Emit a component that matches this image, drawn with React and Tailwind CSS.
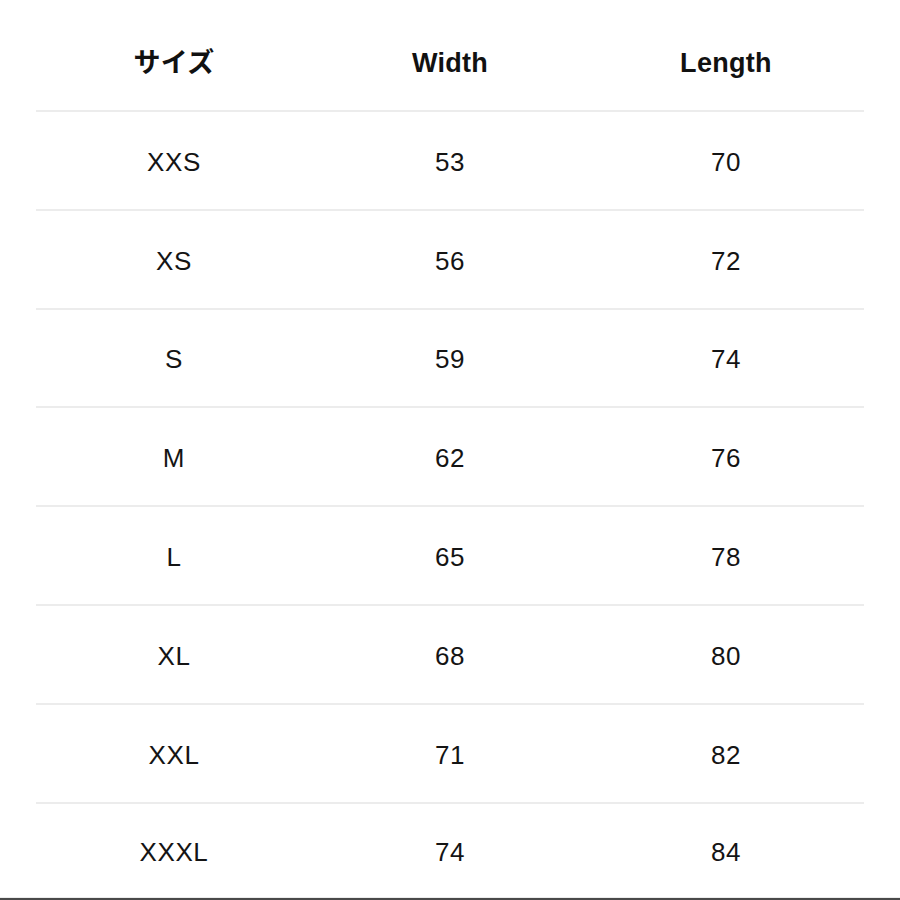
import React from "react";

const rows = [
  ["XXS", "53", "70"],
  ["XS", "56", "72"],
  ["S", "59", "74"],
  ["M", "62", "76"],
  ["L", "65", "78"],
  ["XL", "68", "80"],
  ["XXL", "71", "82"],
  ["XXXL", "74", "84"],
];

export default function App() {
  return (
    <div
      className="w-[900px] h-[900px] bg-white flex flex-col overflow-hidden text-[#141414]"
      style={{ fontFamily: '"Liberation Sans", "Noto Sans CJK JP", sans-serif' }}
    >
      <div className="px-[36px] flex flex-col flex-1">
        <div className="grid grid-cols-3 h-[110px] items-center pt-[16px] text-[27px] font-bold tracking-[0.3px] text-[#111]">
          <div className="text-center">サイズ</div>
          <div className="text-center">Width</div>
          <div className="text-center">Length</div>
        </div>
        {rows.map((r, i) => (
          <div
            key={i}
            className={
              "grid grid-cols-3 items-center border-t-2 border-[#ececec] pt-[4px] text-[26px] tracking-[0.6px] " +
              (i === rows.length - 1 ? "h-[95px]" : "h-[98.8px]")
            }
          >
            {r.map((c, j) => (
              <div key={j} className="text-center">
                {c}
              </div>
            ))}
          </div>
        ))}
      </div>
      <div className="h-[1px] bg-[#ececec] shrink-0" />
      <div className="h-[2px] bg-[#4a4a4a] shrink-0" />
    </div>
  );
}
